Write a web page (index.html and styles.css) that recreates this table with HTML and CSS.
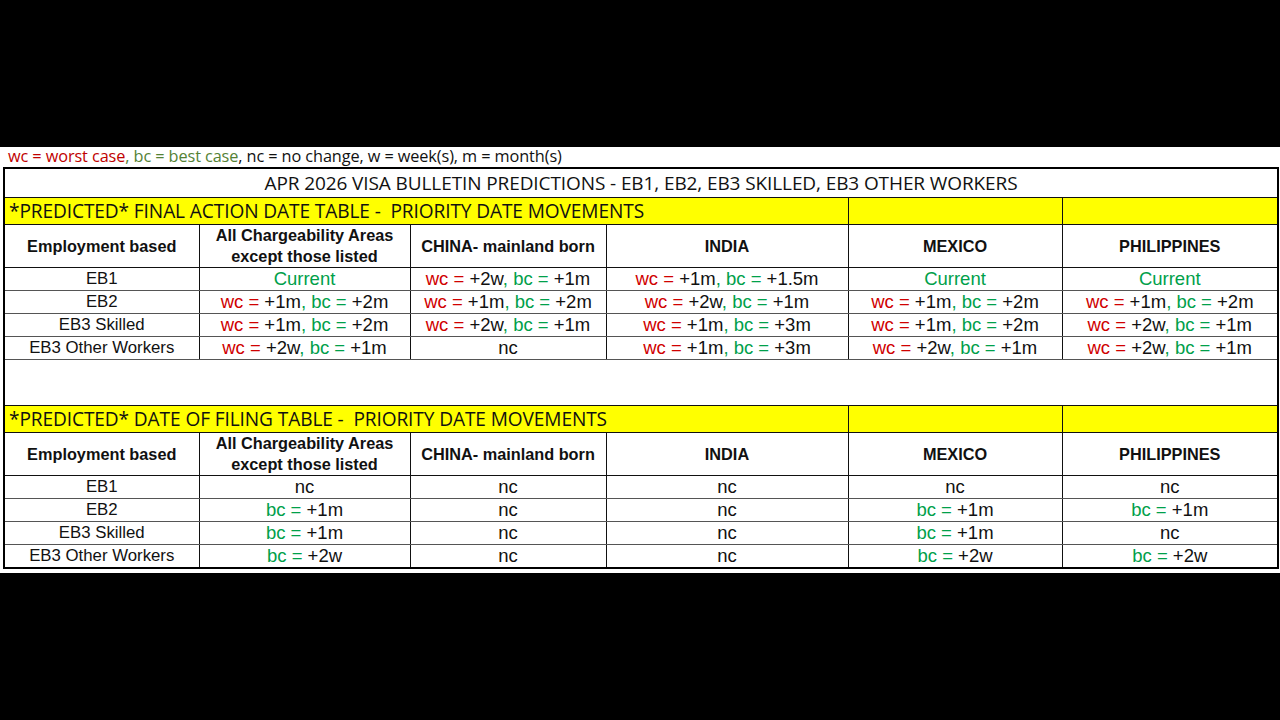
FILE: index.html
```html
<!DOCTYPE html>
<html>
<head>
<meta charset="utf-8">
<link rel="stylesheet" href="styles.css">
</head>
<body>
<div class="sheet">
  <div class="legend"><span class="lr">wc = worst case</span><span class="lg">, bc = best case</span>, nc = no change, w = week(s), m = month(s)</div>
  <table class="grid">
    <colgroup>
      <col class="c1"><col class="c2"><col class="c3"><col class="c4"><col class="c5"><col class="c6">
    </colgroup>
    <tr class="title"><td colspan="6">APR 2026 VISA BULLETIN PREDICTIONS - EB1, EB2, EB3 SKILLED, EB3 OTHER WORKERS</td></tr>
    <tr class="band"><td colspan="4">*PREDICTED* FINAL ACTION DATE TABLE -&nbsp; PRIORITY DATE MOVEMENTS</td><td></td><td class="gl"></td></tr>
    <tr class="head"><td>Employment based</td><td>All Chargeability Areas<br>except those listed</td><td>CHINA- mainland born</td><td>INDIA</td><td>MEXICO</td><td class="gl">PHILIPPINES</td></tr>
    <tr class="row"><td class="lbl">EB1</td><td class="g">Current</td><td><span class="r">wc =</span> +2w<span class="g">, bc =</span> +1m</td><td><span class="r">wc =</span> +1m<span class="g">, bc =</span> +1.5m</td><td class="g">Current</td><td class="g gl">Current</td></tr>
    <tr class="row"><td class="lbl">EB2</td><td><span class="r">wc =</span> +1m<span class="g">, bc =</span> +2m</td><td><span class="r">wc =</span> +1m<span class="g">, bc =</span> +2m</td><td><span class="r">wc =</span> +2w<span class="g">, bc =</span> +1m</td><td><span class="r">wc =</span> +1m<span class="g">, bc =</span> +2m</td><td class="gl"><span class="r">wc =</span> +1m<span class="g">, bc =</span> +2m</td></tr>
    <tr class="row"><td class="lbl">EB3 Skilled</td><td><span class="r">wc =</span> +1m<span class="g">, bc =</span> +2m</td><td><span class="r">wc =</span> +2w<span class="g">, bc =</span> +1m</td><td><span class="r">wc =</span> +1m<span class="g">, bc =</span> +3m</td><td><span class="r">wc =</span> +1m<span class="g">, bc =</span> +2m</td><td class="gl"><span class="r">wc =</span> +2w<span class="g">, bc =</span> +1m</td></tr>
    <tr class="row"><td class="lbl">EB3 Other Workers</td><td><span class="r">wc =</span> +2w<span class="g">, bc =</span> +1m</td><td>nc</td><td><span class="r">wc =</span> +1m<span class="g">, bc =</span> +3m</td><td><span class="r">wc =</span> +2w<span class="g">, bc =</span> +1m</td><td class="gl"><span class="r">wc =</span> +2w<span class="g">, bc =</span> +1m</td></tr>
    <tr class="gap"><td colspan="6"></td></tr>
    <tr class="band"><td colspan="4">*PREDICTED* DATE OF FILING TABLE -&nbsp; PRIORITY DATE MOVEMENTS</td><td></td><td class="gl"></td></tr>
    <tr class="head"><td>Employment based</td><td>All Chargeability Areas<br>except those listed</td><td>CHINA- mainland born</td><td>INDIA</td><td>MEXICO</td><td class="gl">PHILIPPINES</td></tr>
    <tr class="row"><td class="lbl">EB1</td><td>nc</td><td>nc</td><td>nc</td><td>nc</td><td class="gl">nc</td></tr>
    <tr class="row"><td class="lbl">EB2</td><td><span class="g">bc =</span> +1m</td><td>nc</td><td>nc</td><td><span class="g">bc =</span> +1m</td><td class="gl"><span class="g">bc =</span> +1m</td></tr>
    <tr class="row"><td class="lbl">EB3 Skilled</td><td><span class="g">bc =</span> +1m</td><td>nc</td><td>nc</td><td><span class="g">bc =</span> +1m</td><td class="gl">nc</td></tr>
    <tr class="row"><td class="lbl">EB3 Other Workers</td><td><span class="g">bc =</span> +2w</td><td>nc</td><td>nc</td><td><span class="g">bc =</span> +2w</td><td class="gl"><span class="g">bc =</span> +2w</td></tr>
  </table>
</div>
</body>
</html>
```
FILE: styles.css
```css
html, body {
  margin: 0;
  padding: 0;
  background: #000;
}
body {
  padding-top: 147px;
  height: 720px;
  box-sizing: border-box;
}
.sheet {
  background: #fff;
  padding: 0 3px 4px 3px;
}
.legend {
  height: 20px;
  line-height: 19px;
  padding-left: 5px;
  font-family: "Open Sans", sans-serif;
  font-size: 16.3px;
  letter-spacing: -0.1px;
  color: #111;
  white-space: nowrap;
}
.lr { color: #c00000; }
.lg { color: #548235; }
.grid {
  width: 1274px;
  border-collapse: collapse;
  table-layout: fixed;
  border: 2px solid #000;
}
.c1 { width: 195px; }
.c2 { width: 211px; }
.c3 { width: 196px; }
.c4 { width: 242px; }
.c5 { width: 214px; }
.c6 { width: 216px; }
.grid td {
  border: 1px solid #111;
  padding: 0;
  text-align: center;
  white-space: nowrap;
  overflow: hidden;
  font-family: "Liberation Sans", Arial, sans-serif;
  color: #111;
}
.grid td.gl { border-left-color: #888; }
.title td {
  height: 28px;
  font-family: "Open Sans", sans-serif;
  font-size: 19px;
  letter-spacing: -0.1px;
}
.band td {
  height: 26px;
  background: #ffff00;
  text-align: left;
  padding-left: 4px;
  font-family: "Open Sans", sans-serif;
  font-size: 19.1px;
  letter-spacing: -0.1px;
}
.head td {
  height: 42px;
  font-weight: bold;
  font-size: 16.3px;
  line-height: 21px;
}
.row td {
  height: 22px;
  font-size: 18.5px;
  line-height: 22px;
  border-top-color: #555;
  border-bottom-color: #555;
}
.grid .row td.lbl {
  font-size: 16.8px;
}
.gap td {
  height: 45px;
}
.grid .r { color: #d00000; }
.grid .g, .grid td.g { color: #00a04a; }
```
